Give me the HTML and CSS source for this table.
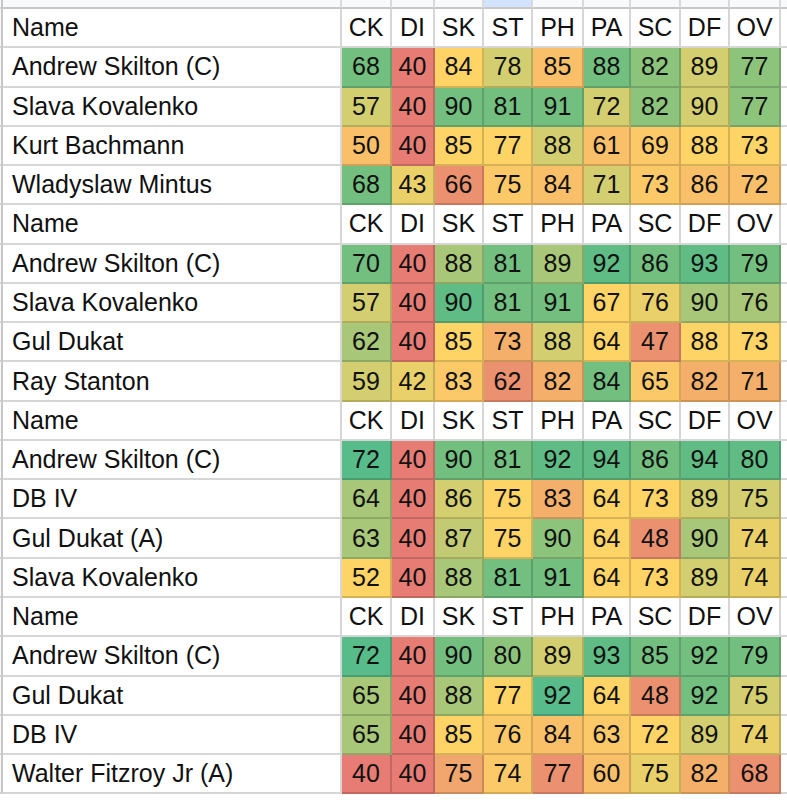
FILE: index.html
```html
<!DOCTYPE html>
<html lang="en">
<head>
<meta charset="utf-8">
<title>Line ratings</title>
<link rel="stylesheet" href="styles.css">
</head>
<body>
<div class="sheet">
  <div class="row colhead">
    <div class="rh"></div><div class="ch"></div><div class="ch"></div><div class="ch"></div><div class="ch"></div><div class="ch sel"></div><div class="ch"></div><div class="ch"></div><div class="ch"></div><div class="ch"></div><div class="ch"></div><div class="ch last"></div>
  </div>

  <div class="row"><div class="rh"></div><div class="c name">Name</div><div class="c">CK</div><div class="c">DI</div><div class="c">SK</div><div class="c">ST</div><div class="c">PH</div><div class="c">PA</div><div class="c">SC</div><div class="c">DF</div><div class="c">OV</div><div class="c last"></div></div>
  <div class="row"><div class="rh"></div><div class="c name">Andrew Skilton (C)</div><div class="c g">68</div><div class="c r">40</div><div class="c y">84</div><div class="c yg">78</div><div class="c oy">85</div><div class="c g">88</div><div class="c mg">82</div><div class="c yg">89</div><div class="c mg">77</div><div class="c last"></div></div>
  <div class="row"><div class="rh"></div><div class="c name">Slava Kovalenko</div><div class="c yg">57</div><div class="c r">40</div><div class="c g">90</div><div class="c g">81</div><div class="c g">91</div><div class="c yg">72</div><div class="c mg">82</div><div class="c yg">90</div><div class="c mg">77</div><div class="c last"></div></div>
  <div class="row"><div class="rh"></div><div class="c name">Kurt Bachmann</div><div class="c oy">50</div><div class="c r">40</div><div class="c y">85</div><div class="c y">77</div><div class="c yg">88</div><div class="c oy">61</div><div class="c yo">69</div><div class="c y">88</div><div class="c y">73</div><div class="c last"></div></div>
  <div class="row"><div class="rh"></div><div class="c name">Wladyslaw Mintus</div><div class="c g">68</div><div class="c yy">43</div><div class="c s">66</div><div class="c yo">75</div><div class="c oy">84</div><div class="c yg">71</div><div class="c yo">73</div><div class="c oy">86</div><div class="c oy">72</div><div class="c last"></div></div>

  <div class="row"><div class="rh"></div><div class="c name">Name</div><div class="c">CK</div><div class="c">DI</div><div class="c">SK</div><div class="c">ST</div><div class="c">PH</div><div class="c">PA</div><div class="c">SC</div><div class="c">DF</div><div class="c">OV</div><div class="c last"></div></div>
  <div class="row"><div class="rh"></div><div class="c name">Andrew Skilton (C)</div><div class="c g">70</div><div class="c r">40</div><div class="c lg">88</div><div class="c g">81</div><div class="c lg">89</div><div class="c dg">92</div><div class="c g">86</div><div class="c dg">93</div><div class="c g">79</div><div class="c last"></div></div>
  <div class="row"><div class="rh"></div><div class="c name">Slava Kovalenko</div><div class="c yg">57</div><div class="c r">40</div><div class="c dg">90</div><div class="c g">81</div><div class="c g">91</div><div class="c y">67</div><div class="c yy">76</div><div class="c lg">90</div><div class="c lg">76</div><div class="c last"></div></div>
  <div class="row"><div class="rh"></div><div class="c name">Gul Dukat</div><div class="c lg">62</div><div class="c r">40</div><div class="c y">85</div><div class="c o">73</div><div class="c yg">88</div><div class="c y">64</div><div class="c s">47</div><div class="c y">88</div><div class="c y">73</div><div class="c last"></div></div>
  <div class="row"><div class="rh"></div><div class="c name">Ray Stanton</div><div class="c yg">59</div><div class="c yy">42</div><div class="c yo">83</div><div class="c s">62</div><div class="c o">82</div><div class="c g">84</div><div class="c yo">65</div><div class="c o">82</div><div class="c o">71</div><div class="c last"></div></div>

  <div class="row"><div class="rh"></div><div class="c name">Name</div><div class="c">CK</div><div class="c">DI</div><div class="c">SK</div><div class="c">ST</div><div class="c">PH</div><div class="c">PA</div><div class="c">SC</div><div class="c">DF</div><div class="c">OV</div><div class="c last"></div></div>
  <div class="row"><div class="rh"></div><div class="c name">Andrew Skilton (C)</div><div class="c tg">72</div><div class="c r">40</div><div class="c g">90</div><div class="c g">81</div><div class="c dg">92</div><div class="c dg">94</div><div class="c g">86</div><div class="c dg">94</div><div class="c dg">80</div><div class="c last"></div></div>
  <div class="row"><div class="rh"></div><div class="c name">DB IV</div><div class="c lg">64</div><div class="c r">40</div><div class="c yg">86</div><div class="c y">75</div><div class="c o">83</div><div class="c y">64</div><div class="c y">73</div><div class="c yg">89</div><div class="c yg">75</div><div class="c last"></div></div>
  <div class="row"><div class="rh"></div><div class="c name">Gul Dukat (A)</div><div class="c lg">63</div><div class="c r">40</div><div class="c ylg">87</div><div class="c y">75</div><div class="c mg">90</div><div class="c y">64</div><div class="c s">48</div><div class="c lg">90</div><div class="c yy">74</div><div class="c last"></div></div>
  <div class="row"><div class="rh"></div><div class="c name">Slava Kovalenko</div><div class="c y">52</div><div class="c r">40</div><div class="c lg">88</div><div class="c g">81</div><div class="c g">91</div><div class="c y">64</div><div class="c y">73</div><div class="c yg">89</div><div class="c yy">74</div><div class="c last"></div></div>

  <div class="row"><div class="rh"></div><div class="c name">Name</div><div class="c">CK</div><div class="c">DI</div><div class="c">SK</div><div class="c">ST</div><div class="c">PH</div><div class="c">PA</div><div class="c">SC</div><div class="c">DF</div><div class="c">OV</div><div class="c last"></div></div>
  <div class="row"><div class="rh"></div><div class="c name">Andrew Skilton (C)</div><div class="c tg">72</div><div class="c r">40</div><div class="c g">90</div><div class="c mg">80</div><div class="c yg">89</div><div class="c dg">93</div><div class="c g">85</div><div class="c g">92</div><div class="c g">79</div><div class="c last"></div></div>
  <div class="row"><div class="rh"></div><div class="c name">Gul Dukat</div><div class="c lg">65</div><div class="c r">40</div><div class="c lg">88</div><div class="c y">77</div><div class="c tg">92</div><div class="c y">64</div><div class="c s">48</div><div class="c g">92</div><div class="c yg">75</div><div class="c last"></div></div>
  <div class="row"><div class="rh"></div><div class="c name">DB IV</div><div class="c lg">65</div><div class="c r">40</div><div class="c y">85</div><div class="c yo">76</div><div class="c oy">84</div><div class="c yo">63</div><div class="c y">72</div><div class="c yg">89</div><div class="c yy">74</div><div class="c last"></div></div>
  <div class="row"><div class="rh"></div><div class="c name">Walter Fitzroy Jr (A)</div><div class="c r">40</div><div class="c r">40</div><div class="c os">75</div><div class="c yo">74</div><div class="c s">77</div><div class="c oy">60</div><div class="c yy">75</div><div class="c o">82</div><div class="c s">68</div><div class="c last"></div></div>
</div>
</body>
</html>
```

FILE: styles.css
```css
html, body {
  margin: 0;
  padding: 0;
  background: #ffffff;
}

body {
  width: 787px;
  height: 800px;
  overflow: hidden;
  font-family: "Liberation Sans", Arial, sans-serif;
  color: #111111;
}

.sheet {
  display: flex;
  flex-direction: column;
}

.row {
  display: grid;
  grid-template-columns: 3px 339px 50px 43px 49px 49px 51px 47px 50px 49px 51px 6px;
  height: 39.27px;
}

.row.colhead {
  height: 9px;
}

.rh,
.ch,
.c {
  box-sizing: border-box;
  border-right: 2px solid rgba(0, 0, 0, 0.16);
  border-bottom: 2px solid rgba(0, 0, 0, 0.16);
}

.rh {
  background: #f8f9fa;
  border-right-color: #c7c7c7;
}

.ch {
  background: #f8f9fa;
  border-bottom-color: #c7c7c7;
  border-right-color: #d9d9d9;
}

.ch.sel {
  background: #d3e3fd;
}

.ch.last,
.c.last {
  border-right: none;
}

.c {
  display: flex;
  align-items: center;
  justify-content: center;
  font-size: 25px;
  white-space: nowrap;
  overflow: hidden;
}

.c.name {
  justify-content: flex-start;
  padding-left: 9px;
}

/* colour scale steps */
.r   { background: #e67c73; }
.s   { background: #eb9170; }
.os  { background: #f0a66d; }
.o   { background: #f4b06b; }
.oy  { background: #f9bf69; }
.yo  { background: #fcc969; }
.y   { background: #fed466; }
.yy  { background: #ead068; }
.yg  { background: #d3ce6f; }
.ylg { background: #c2cb73; }
.lg  { background: #a8c779; }
.mg  { background: #8dc47c; }
.g   { background: #72bf80; }
.dg  { background: #5fbc85; }
.tg  { background: #57bb8a; }
```
